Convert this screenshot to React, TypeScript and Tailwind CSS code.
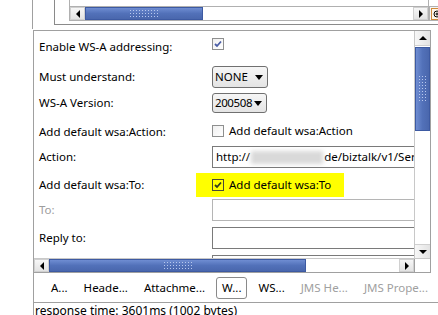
import React from "react";

const Grip = ({ vertical = false }: { vertical?: boolean }) => (
  <div
    className={
      vertical
        ? "w-[9px] h-[28px] bg-[radial-gradient(circle,#b8c8ee_0.8px,transparent_1px)] bg-[length:3px_3px]"
        : "w-[30px] h-[9px] bg-[radial-gradient(circle,#b8c8ee_0.8px,transparent_1px)] bg-[length:3px_3px]"
    }
  />
);

const ArrowBtn = ({ dir }: { dir: "l" | "r" }) => {
  const tri =
    dir === "l"
      ? "border-y-[4px] border-y-transparent border-r-[4px] border-r-black"
      : "border-y-[4px] border-y-transparent border-l-[4px] border-l-black";
  return (
    <div className="w-[15px] h-full flex items-center justify-center bg-gradient-to-b from-[#f7f7f7] to-[#e3e3e3] border border-[#d0d0d0] shrink-0">
      <div className={"w-0 h-0 " + tri} />
    </div>
  );
};

const HThumb = ({ w }: { w: number }) => (
  <div
    className="h-full flex items-center justify-center bg-gradient-to-b from-[#6f8dd2] via-[#5271b9] to-[#4a67ad] border border-[#3d5aa2] shrink-0"
    style={{ width: w }}
  >
    <Grip />
  </div>
);

const Check = ({ checked, dark }: { checked?: boolean; dark?: boolean }) => (
  <div
    className={
      "w-[12px] h-[12px] border flex items-center justify-center shrink-0 " +
      (dark ? "border-[#4a4a3a] bg-transparent" : "border-[#8e8f8f] bg-gradient-to-br from-[#f0f0f0] to-white")
    }
  >
    {checked && (
      <svg width="8" height="8" viewBox="0 0 8 8">
        <path
          d="M1 4 L3 6 L7 1.5"
          fill="none"
          stroke={dark ? "#2f3a1c" : "#4a5da6"}
          strokeWidth="1.8"
        />
      </svg>
    )}
  </div>
);

const Select = ({ value, w, h, tight }: { value: string; w: number; h: number; tight?: boolean }) => (
  <div
    className="flex items-center justify-between border border-[#707070] rounded-[3px] bg-gradient-to-b from-[#f6f6f6] to-[#e4e4e4] pl-[2px] pr-[4px]"
    style={{ width: w, height: h }}
  >
    <span className={"leading-none " + (tight ? "tracking-[-0.4px]" : "")}>{value}</span>
    <div className="w-0 h-0 border-x-[4px] border-x-transparent border-t-[5px] border-t-black" />
  </div>
);

const Row = ({ label, children, h, mt, disabled }: { label: string; children: React.ReactNode; h: number; mt: number; disabled?: boolean }) => (
  <div className="flex items-center shrink-0" style={{ height: h, marginTop: mt }}>
    <div className={"w-[178px] pl-[5px] shrink-0 whitespace-nowrap " + (disabled ? "text-[#9d9d9d]" : "")}>{label}</div>
    <div className="flex items-center flex-1 min-w-0 h-full">{children}</div>
  </div>
);

const Input = ({ light, children }: { light?: boolean; children?: React.ReactNode }) => (
  <div
    className={
      "h-[22px] w-[240px] shrink-0 border bg-white flex items-center pl-[3px] whitespace-nowrap overflow-hidden " +
      (light ? "border-[#b5b5b5]" : "border-[#7a7a7a]")
    }
  >
    {children}
  </div>
);

export default function App() {
  return (
    <div className="w-[438px] h-[315px] overflow-hidden bg-white text-black text-[11.5px] font-['Noto_Sans',sans-serif] flex flex-col">
      {/* top panel remainder */}
      <div className="h-[30px] flex shrink-0">
        <div className="w-[33px] h-[29px] border-r border-[#a0a0a0] shrink-0" />
        <div className="w-[21px] shrink-0" />
        <div className="flex-1 h-[25px] border-l border-b border-[#8a8a8a] flex">
          <div className="w-[14px] shrink-0" />
          <div className="flex flex-col w-[360px] shrink-0">
            <div className="h-[6px] border-l border-r border-[#b0b0b0]" />
            <div className="h-[15px] flex border border-[#b0b0b0]">
              <ArrowBtn dir="l" />
              <HThumb w={118} />
              <div className="flex-1 bg-white" />
              <ArrowBtn dir="r" />
            </div>
          </div>
          <div className="flex flex-col w-[16px] shrink-0">
            <div className="h-[6px] border-r border-[#b0b0b0]" />
            <div className="h-[15px] border border-[#b0b0b0] flex items-center justify-center bg-[#f4f4f4]">
              <svg width="12" height="12" viewBox="0 0 12 12">
                <rect x="0.5" y="0.5" width="11" height="11" fill="#fff6e8" stroke="#d08a3a" />
                <circle cx="6" cy="6" r="3" fill="none" stroke="#000" strokeWidth="1" />
                <path d="M4.5 6 H7.5 M6 4.5 V7.5 M8.2 8.2 L10.5 10.5" stroke="#000" strokeWidth="1" />
              </svg>
            </div>
          </div>
        </div>
      </div>

      {/* main panel */}
      <div className="ml-[33px] w-[398px] h-[243px] border border-[#a0a0a0] flex flex-col shrink-0">
        <div className="flex flex-1 min-h-0">
          <div className="flex-1 min-w-0 overflow-hidden flex flex-col pt-[5px]">
            <Row label="Enable WS-A addressing:" h={22} mt={0}>
              <div className="-mt-[7px]">
                <Check checked />
              </div>
            </Row>
            <Row label="Must understand:" h={22} mt={8}>
              <Select value="NONE" w={56} h={22} />
            </Row>
            <Row label="WS-A Version:" h={20} mt={5}>
              <Select value="200508" w={55} h={20} tight />
            </Row>
            <Row label="Add default wsa:Action:" h={22} mt={8}>
              <div className="flex items-center gap-[5px] -mt-[2px]">
                <Check />
                <span className="whitespace-nowrap">Add default wsa:Action</span>
              </div>
            </Row>
            <Row label="Action:" h={22} mt={3}>
              <Input>
                <span>http://</span>
                <span className="inline-block w-[72px] h-[13px] bg-[#d9d9d9] blur-[2px] mx-[1px]" />
                <span>de/biztalk/v1/Serv</span>
              </Input>
            </Row>
            <Row label="Add default wsa:To:" h={24} mt={5}>
              <div className="h-[24px] -ml-[16px] pl-[16px] pr-[13px] bg-[#ffff00] flex items-center gap-[5px]">
                <Check checked dark />
                <span className="whitespace-nowrap">Add default wsa:To</span>
              </div>
            </Row>
            <Row label="To:" h={22} mt={2} disabled>
              <Input light />
            </Row>
            <Row label="Reply to:" h={22} mt={6}>
              <Input />
            </Row>
            <Row label="" h={22} mt={6}>
              <Input />
            </Row>
          </div>
          {/* vertical scrollbar */}
          <div className="w-[16px] shrink-0 border-l border-[#c8c8c8] flex flex-col bg-white">
            <div className="w-full h-[15px] flex items-center justify-center bg-gradient-to-r from-[#f7f7f7] to-[#e3e3e3] border-b border-[#d0d0d0]">
              <div className="w-0 h-0 border-x-[4px] border-x-transparent border-b-[4px] border-b-black" />
            </div>
            <div className="h-[84px] mt-[1px] flex items-center justify-center bg-gradient-to-r from-[#6f8dd2] via-[#5271b9] to-[#4a67ad] border border-[#3d5aa2]">
              <Grip vertical />
            </div>
            <div className="flex-1" />
            <div className="w-full h-[14px] flex items-center justify-center bg-gradient-to-r from-[#f7f7f7] to-[#e3e3e3] border-t border-[#d0d0d0]">
              <div className="w-0 h-0 border-x-[4px] border-x-transparent border-t-[4px] border-t-black" />
            </div>
          </div>
        </div>
        {/* horizontal scrollbar */}
        <div className="h-[14px] flex shrink-0 border-t border-[#c8c8c8]">
          <div className="flex-1 flex">
            <ArrowBtn dir="l" />
            <HThumb w={257} />
            <div className="flex-1 bg-white" />
            <ArrowBtn dir="r" />
          </div>
          <div className="w-[16px] shrink-0 border-l border-[#a0a0a0] bg-white" />
        </div>
      </div>

      {/* tabs */}
      <div className="ml-[33px] border-l border-[#a0a0a0] flex-1 flex flex-col">
        <div className="h-[30px] border-b border-[#a0a0a0] flex items-center pl-[12px] gap-[6px] whitespace-nowrap">
          <div className="px-[5px] h-[22px] flex items-center">A...</div>
          <div className="px-[5px] h-[22px] flex items-center">Heade...</div>
          <div className="px-[5px] h-[22px] flex items-center">Attachme...</div>
          <div className="px-[5px] h-[22px] flex items-center border border-[#8a8a8a] rounded-[3px]">W...</div>
          <div className="px-[5px] h-[22px] flex items-center">WS...</div>
          <div className="px-[5px] h-[22px] flex items-center text-[#a0a0a0]">JMS He...</div>
          <div className="px-[5px] h-[22px] flex items-center text-[#a0a0a0]">JMS Prope...</div>
        </div>
        <div className="pl-[1px] leading-[14px] pt-[1px] whitespace-nowrap text-[12px]">response time: 3601ms (1002 bytes)</div>
      </div>
    </div>
  );
}
